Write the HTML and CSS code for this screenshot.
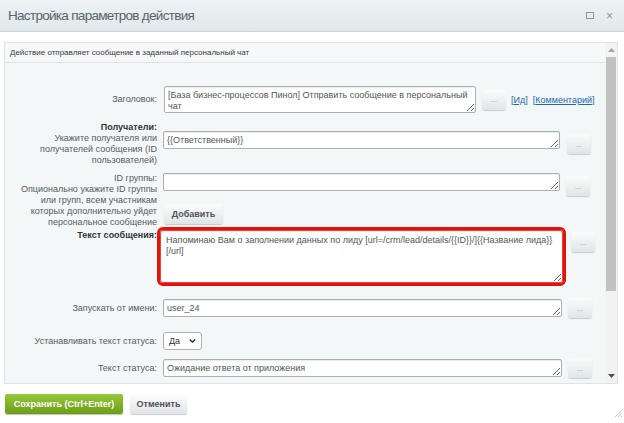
FILE: index.html
```html
<!DOCTYPE html>
<html lang="ru">
  <head>
    <meta charset="UTF-8" />
    <meta name="viewport" content="width=device-width, initial-scale=1.0" />
    <title>Настройка параметров действия</title>
    <link rel="stylesheet" href="styles.css">
  </head>
  <body>
    <div class="titlebar">
        <span class="title">Настройка параметров действия</span>
        <span class="title-icons">
            <span class="icon-max"></span>
            <span class="icon-close">×</span>
        </span>
    </div>

    <div class="panel">
        <div class="content">
            <div class="descr">Действие отправляет сообщение в заданный персональный чат</div>

            <div class="row row-title">
                <div class="label">Заголовок:</div>
                <div class="field">
                    <textarea class="ta ta-title">[База бизнес-процессов Пинол] Отправить сообщение в персональный чат</textarea>
                    <button class="dots">...</button>
                    <span class="links">[<a href="#">Ид</a>] &nbsp;[<a href="#">Комментарий</a>]</span>
                </div>
            </div>

            <div class="row row-users">
                <div class="label"><b>Получатели:</b><br>Укажите получателя или<br>получателей сообщения (ID<br>пользователей)</div>
                <div class="field">
                    <textarea class="ta ta-wide">{{Ответственный}}</textarea>
                    <button class="dots">...</button>
                </div>
            </div>

            <div class="row row-group">
                <div class="label">ID группы:<br>Опционально укажите ID группы<br>или групп, всем участникам<br>которых дополнительно уйдет<br>персональное сообщение</div>
                <div class="field-col">
                    <div class="field">
                        <textarea class="ta ta-wide"></textarea>
                        <button class="dots">...</button>
                    </div>
                    <button class="btn-add">Добавить</button>
                </div>
            </div>

            <div class="row row-message">
                <div class="label"><b>Текст сообщения:</b></div>
                <div class="field">
                    <textarea class="ta ta-message">Напоминаю Вам о заполнении данных по лиду [url=/crm/lead/details/{{ID}}/]{{Название лида}}[/url]</textarea>
                    <button class="dots">...</button>
                </div>
            </div>

            <div class="row row-user">
                <div class="label">Запускать от имени:</div>
                <div class="field">
                    <textarea class="ta ta-line">user_24</textarea>
                    <button class="dots">...</button>
                </div>
            </div>

            <div class="row row-set">
                <div class="label">Устанавливать текст статуса:</div>
                <div class="field">
                    <span class="select">Да
                        <svg width="9" height="6" viewBox="0 0 9 6"><path d="M1 1l3.5 3.5L8 1" fill="none" stroke="#222" stroke-width="1.8"/></svg>
                    </span>
                </div>
            </div>

            <div class="row row-status">
                <div class="label">Текст статуса:</div>
                <div class="field">
                    <textarea class="ta ta-line">Ожидание ответа от приложения</textarea>
                    <button class="dots">...</button>
                </div>
            </div>
        </div>

        <div class="scrollbar">
            <svg class="arrow" width="7" height="4" viewBox="0 0 7 4"><path d="M0 4L3.5 0L7 4z" fill="#a3a3a3"/></svg>
            <div class="thumb"></div>
            <div class="track"></div>
            <svg class="arrow" width="7" height="4" viewBox="0 0 7 4"><path d="M0 0L3.5 4L7 0z" fill="#505050"/></svg>
        </div>
    </div>

    <div class="footer">
        <button class="btn-save">Сохранить (Ctrl+Enter)</button>
        <button class="btn-cancel">Отменить</button>
        <svg class="grip" width="8" height="8" viewBox="0 0 8 8"><path d="M8 1L1 8M8 4L4 8M8 7L7 8" stroke="#c5c9cb" stroke-width="1"/></svg>
    </div>
  </body>
</html>
```

FILE: styles.css
```css
body {
    margin: 0;
    background: #fff;
    font-family: "Liberation Sans", Arial, sans-serif;
    color: #4b4f52;
    width: 624px;
    height: 423px;
    overflow: hidden;
}
.titlebar {
    height: 31px;
    display: flex;
    align-items: center;
    justify-content: space-between;
    padding: 0 8px;
    background: linear-gradient(#eef3f4, #dfe8ea);
    border-bottom: 1px solid #c9d2d5;
}
.title {
    font-size: 13.5px;
    color: #59636a;
    letter-spacing: -0.7px;
}
.title-icons {
    display: flex;
    align-items: center;
    gap: 12px;
    margin-right: 3px;
}
.icon-max {
    width: 6px;
    height: 5px;
    border: 1px solid #8c979c;
}
.icon-close {
    font-size: 12px;
    color: #8c979c;
}
.panel {
    display: flex;
    margin: 10px 6px 0 4px;
    height: 340px;
    border: 1px solid #dde4e7;
    background: #f4f7f8;
}
.content {
    flex: 1;
}
.descr {
    height: 19px;
    line-height: 19px;
    padding-left: 5px;
    font-size: 8px;
    color: #3a3a3a;
    background: #f6f8f9;
    border-bottom: 1px solid #dde4e7;
}
.row {
    display: flex;
    align-items: center;
}
.label {
    width: 152px;
    flex: none;
    text-align: right;
    font-size: 9px;
    line-height: 11px;
    color: #555a5e;
    margin-right: 6px;
}
.label b {
    color: #333;
}
.field {
    display: flex;
    align-items: center;
    gap: 6px;
}
.field-col {
    display: flex;
    flex-direction: column;
}
.ta {
    box-sizing: border-box;
    font-family: "Liberation Sans", Arial, sans-serif;
    font-size: 9px;
    line-height: 11px;
    color: #555;
    padding: 3px 3px;
    border: 1px solid #a9b1b5;
    border-radius: 2px;
    background: #fff;
    box-shadow: inset 0 1px 1px rgba(0, 0, 0, 0.08);
    margin: 0;
}
.ta-title {
    width: 312px;
    height: 27px;
    margin-left: 1px;
}
.ta-wide {
    width: 397px;
    height: 18px;
    padding-top: 3px;
}
.ta-line {
    width: 399px;
    height: 18px;
    padding-top: 3px;
}
.ta-message {
    width: 403px;
    height: 53px;
    margin-left: -3px;
    border-color: #e5443c;
    outline: 3px solid #e3130c;
    outline-offset: 0;
    border-radius: 3px;
    padding: 4px 5px;
}
.dots {
    width: 24px;
    height: 20px;
    flex: none;
    padding: 0;
    font-size: 7px;
    color: #888;
    border: none;
    border-radius: 3px;
    background: linear-gradient(#fbfcfc, #dfe5e7);
    box-shadow: 0 1px 1px rgba(0, 0, 0, 0.18);
}
.links {
    font-size: 9px;
    color: #2067b0;
    margin-left: -1px;
}
.links a {
    color: #2067b0;
}
.row-title {
    margin-top: 23px;
}
.row-users {
    margin-top: 9px;
    align-items: flex-start;
}
.row-users .field {
    margin-top: 9px;
    align-items: flex-start;
}
.row-users .dots {
    margin-top: 3px;
    margin-left: 1px;
}
.row-group {
    margin-top: 7px;
    align-items: flex-start;
}
.row-group .field {
    align-items: flex-start;
}
.row-group .dots {
    margin-top: 3px;
}
.btn-add {
    align-self: flex-start;
    margin-top: 8px;
    margin-left: 1px;
    width: 59px;
    height: 20px;
    font-family: "Liberation Sans", Arial, sans-serif;
    font-size: 9px;
    font-weight: bold;
    color: #555;
    border: none;
    border-radius: 3px;
    background: linear-gradient(#fbfcfc, #dfe5e7);
    box-shadow: 0 1px 1px rgba(0, 0, 0, 0.18);
}
.row-message {
    margin-top: 2px;
    align-items: flex-start;
}
.row-message .field {
    align-items: flex-start;
}
.row-message .dots {
    margin-top: 2px;
    margin-left: 2px;
}
.row-user {
    margin-top: 15px;
}
.row-set {
    margin-top: 14px;
}
.row-status {
    margin-top: 8px;
}
.select {
    box-sizing: border-box;
    display: flex;
    align-items: center;
    gap: 9px;
    width: 39px;
    height: 18px;
    padding: 0 5px;
    font-size: 9px;
    color: #333;
    border: 1px solid #a9b1b5;
    border-radius: 3px;
    background: #fff;
}
.scrollbar {
    width: 12px;
    display: flex;
    flex-direction: column;
    align-items: center;
    background: #f1f2f2;
}
.arrow {
    margin: 5px 0;
    flex: none;
}
.thumb {
    width: 10px;
    height: 234px;
    background: #c1c1c1;
}
.track {
    flex: 1;
}
.footer {
    display: flex;
    align-items: flex-start;
    gap: 7px;
    margin: 10px 0 0 5px;
}
.btn-save,
.btn-cancel {
    height: 20px;
    padding: 0;
    font-family: "Liberation Sans", Arial, sans-serif;
    font-size: 9px;
    font-weight: bold;
    border-radius: 2px;
}
.btn-save {
    width: 118px;
    color: #fff;
    border: none;
    background: linear-gradient(#97c73d, #6c9d16);
    box-shadow: 0 1px 1px rgba(0, 0, 0, 0.25);
}
.btn-cancel {
    width: 57px;
    color: #555;
    border: none;
    background: linear-gradient(#fdfefe, #e0e5e7);
    box-shadow: 0 1px 1px rgba(0, 0, 0, 0.2);
}
.grip {
    margin-left: auto;
    margin-top: 15px;
    margin-right: 2px;
}
```
